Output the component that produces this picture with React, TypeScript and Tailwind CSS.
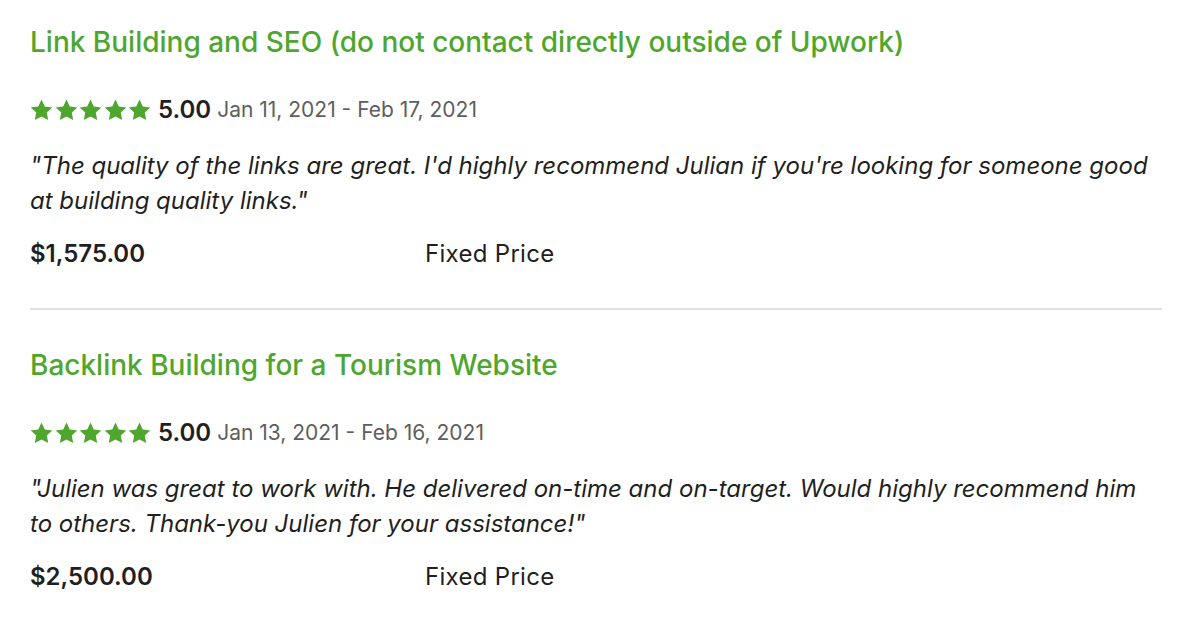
import React from "react";

const GREEN = "#4fa62e";

function Star() {
  return (
    <svg width="23" height="22" viewBox="0 0 24 23" className="shrink-0">
      <path
        d="M12 0.6l3.4 7.2 7.9 1-5.8 5.4 1.5 7.8L12 18.2l-7 3.8 1.5-7.8L0.7 8.8l7.9-1z"
        fill={GREEN}
      />
    </svg>
  );
}

type Review = {
  title: string;
  start: string;
  end: string;
  quote: string;
  price: string;
};

const reviews: Review[] = [
  {
    title: "Link Building and SEO (do not contact directly outside of Upwork)",
    start: "Jan 11, 2021",
    end: "Feb 17, 2021",
    quote:
      "\"The quality of the links are great. I'd highly recommend Julian if you're looking for someone good at building quality links.\"",
    price: "$1,575.00",
  },
  {
    title: "Backlink Building for a Tourism Website",
    start: "Jan 13, 2021",
    end: "Feb 16, 2021",
    quote:
      "\"Julien was great to work with. He delivered on-time and on-target. Would highly recommend him to others. Thank-you Julien for your assistance!\"",
    price: "$2,500.00",
  },
];

function ReviewItem({ r }: { r: Review }) {
  return (
    <div className="flex flex-col">
      <div className="text-[28px] leading-[30px] font-medium text-[#4fa62e]">
        {r.title}
      </div>
      <div className="mt-[41px] flex items-center h-[24px]">
        <div className="flex gap-[1.5px]">
          <Star />
          <Star />
          <Star />
          <Star />
          <Star />
        </div>
        <span className="ml-[7px] text-[24px] font-semibold text-[#1f1f1f]">
          5.00
        </span>
        <span className="ml-[6px] text-[21px] text-[#5e5e5e]">
          {r.start} - {r.end}
        </span>
      </div>
      <div className="mt-[26px] text-[24px] leading-[35px] italic text-[#1f1f1f]">
        {r.quote}
      </div>
      <div className="mt-[21px] flex items-center text-[24px] leading-[30px] text-[#1f1f1f]">
        <span className="w-[395px] font-semibold">{r.price}</span>
        <span className="tracking-[0.3px]">Fixed Price</span>
      </div>
    </div>
  );
}

export default function App() {
  return (
    <div
      className="w-[1202px] h-[620px] bg-white px-[30px] pt-[27px] overflow-hidden"
      style={{ fontFamily: 'Inter, "Liberation Sans", Arial, sans-serif' }}
    >
      <div className="w-[1132px]">
        <ReviewItem r={reviews[0]} />
        <div className="mt-[39px] mb-[40px] h-[2px] bg-[#e0e0e0]" />
        <ReviewItem r={reviews[1]} />
      </div>
    </div>
  );
}
